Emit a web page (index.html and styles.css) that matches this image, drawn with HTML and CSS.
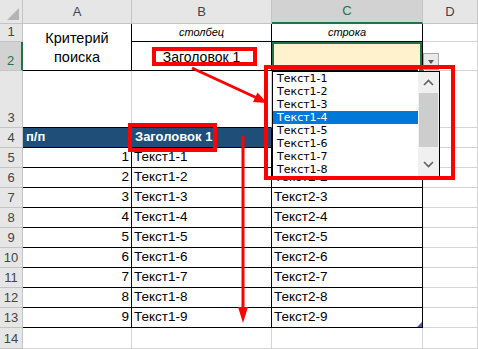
FILE: index.html
```html
<!DOCTYPE html>
<html lang="ru">
    <head>
        <meta charset="UTF-8">
        <meta name="viewport" content="width=device-width, initial-scale=1.0">
        <title>Поиск по заголовку</title>
        <link rel="stylesheet" href="styles.css">
    </head>
    <body>
        <div class="page">
            <!-- Sheet grid: header row + rows 1..14 -->
            <div class="sheet">
                <div class="hd corner"></div>
                <div class="hd col-hd">A</div>
                <div class="hd col-hd">B</div>
                <div class="hd col-hd sel">C</div>
                <div class="hd col-hd">D</div>

                <div class="hd row-hd">1</div>
                <div class="merge bk-r bk-b">Критерий поиска</div>
                <div class="note bk-r bk-b">столбец</div>
                <div class="note bk-r bk-b">строка</div>
                <div></div>

                <div class="hd row-hd sel">2</div>
                <div class="center bk-r bk-b">Заголовок 1</div>
                <div class="active bk-r bk-b"></div>
                <div></div>

                <div class="hd row-hd">3</div>
                <div class="bk-b"></div>
                <div class="bk-b"></div>
                <div class="bk-b"></div>
                <div></div>

                <div class="hd row-hd">4</div>
                <div class="th bk-r bk-b">п/п</div>
                <div class="th bk-r bk-b">Заголовок 1</div>
                <div class="th bk-r bk-b"></div>
                <div></div>

                <div class="hd row-hd">5</div>
                <div class="num bk-r bk-b">1</div>
                <div class="bk-r bk-b">Текст1-1</div>
                <div class="bk-r bk-b"></div>
                <div></div>

                <div class="hd row-hd">6</div>
                <div class="num bk-r bk-b">2</div>
                <div class="bk-r bk-b">Текст1-2</div>
                <div class="bk-r bk-b">Текст2-2</div>
                <div></div>

                <div class="hd row-hd">7</div>
                <div class="num bk-r bk-b">3</div>
                <div class="bk-r bk-b">Текст1-3</div>
                <div class="bk-r bk-b">Текст2-3</div>
                <div></div>

                <div class="hd row-hd">8</div>
                <div class="num bk-r bk-b">4</div>
                <div class="bk-r bk-b">Текст1-4</div>
                <div class="bk-r bk-b">Текст2-4</div>
                <div></div>

                <div class="hd row-hd">9</div>
                <div class="num bk-r bk-b">5</div>
                <div class="bk-r bk-b">Текст1-5</div>
                <div class="bk-r bk-b">Текст2-5</div>
                <div></div>

                <div class="hd row-hd">10</div>
                <div class="num bk-r bk-b">6</div>
                <div class="bk-r bk-b">Текст1-6</div>
                <div class="bk-r bk-b">Текст2-6</div>
                <div></div>

                <div class="hd row-hd">11</div>
                <div class="num bk-r bk-b">7</div>
                <div class="bk-r bk-b">Текст1-7</div>
                <div class="bk-r bk-b">Текст2-7</div>
                <div></div>

                <div class="hd row-hd">12</div>
                <div class="num bk-r bk-b">8</div>
                <div class="bk-r bk-b">Текст1-8</div>
                <div class="bk-r bk-b">Текст2-8</div>
                <div></div>

                <div class="hd row-hd">13</div>
                <div class="num bk-r bk-b">9</div>
                <div class="bk-r bk-b">Текст1-9</div>
                <div class="table-end bk-r bk-b">Текст2-9</div>
                <div></div>

                <div class="hd row-hd">14</div>
                <div></div>
                <div></div>
                <div></div>
                <div></div>
            </div>

            <!-- Data validation dropdown for C2 -->
            <div class="dv-btn"></div>
            <div class="dv-list">
                <ul class="dv-items">
                    <li>Текст1-1</li>
                    <li>Текст1-2</li>
                    <li>Текст1-3</li>
                    <li class="hl">Текст1-4</li>
                    <li>Текст1-5</li>
                    <li>Текст1-6</li>
                    <li>Текст1-7</li>
                    <li>Текст1-8</li>
                </ul>
                <div class="dv-scroll">
                    <div class="dv-arrow">
                        <svg width="21" height="21" viewBox="0 0 21 21"><polyline points="6,13 10.5,8.5 15,13" fill="none" stroke="#606060" stroke-width="1.6"/></svg>
                    </div>
                    <div class="dv-thumb"></div>
                    <div class="dv-track"></div>
                    <div class="dv-arrow">
                        <svg width="21" height="21" viewBox="0 0 21 21"><polyline points="6,7 10.5,11.5 15,7" fill="none" stroke="#606060" stroke-width="1.6"/></svg>
                    </div>
                </div>
            </div>

            <!-- Red callouts -->
            <svg class="marks" width="478" height="349" viewBox="0 0 478 349">
                <g fill="none" stroke="#ff0000" stroke-width="4">
                    <rect x="154" y="49" width="101" height="15"/>
                    <rect x="266" y="67" width="187" height="111"/>
                    <rect x="130" y="125" width="85" height="25"/>
                </g>
                <g stroke="#ff0000" stroke-width="3">
                    <line x1="192" y1="68" x2="257" y2="98"/>
                    <line x1="243" y1="136" x2="243" y2="310"/>
                </g>
                <g fill="#ff0000">
                    <polygon points="267,103 257.5,92.5 253,102"/>
                    <polygon points="238,307 248,307 243,323"/>
                </g>
            </svg>
        </div>
    </body>
</html>
```

FILE: styles.css
```css
/* Page */
body {
    margin: 0;
    background-color: white;
    font-family: 'Liberation Sans', Arial, sans-serif;
    overflow: hidden;
}

.page {
    position: relative;
    width: 478px;
    height: 349px;
    overflow: hidden;
}

/* Sheet grid */
.sheet {
    display: grid;
    grid-template-columns: 23px 109px 140px 151px 55px;
    grid-template-rows: 24px 18px 29px 57px repeat(10, 20px) 21px;
}

.sheet > div {
    box-sizing: border-box;
    display: flex;
    align-items: flex-end;
    padding: 0 2px 1px 2px;
    border-right: 1px solid #d4d4d4;
    border-bottom: 1px solid #d4d4d4;
    font-size: 13.5px;
    line-height: 18px;
    color: black;
    white-space: nowrap;
    overflow: hidden;
}

/* Black table borders */
.sheet > .bk-r {
    border-right-color: black;
}

.sheet > .bk-b {
    border-bottom-color: black;
}

/* Row and column headers */
.sheet > .hd {
    justify-content: center;
    padding: 0;
    background-color: #e6e6e6;
    border-color: #c4c4c4;
    color: #444;
    font-size: 13px;
}

.sheet > .col-hd {
    align-items: center;
}

.sheet > .hd.sel {
    background-color: #d2d2d2;
    color: #217346;
}

.sheet > .col-hd.sel {
    border-bottom: 2px solid #217346;
}

.sheet > .row-hd.sel {
    border-right: 2px solid #217346;
}

.corner {
    position: relative;
}

.corner::after {
    content: "";
    position: absolute;
    right: 3px;
    bottom: 3px;
    width: 12px;
    height: 12px;
    background-color: #b4b4b4;
    clip-path: polygon(100% 0, 100% 100%, 0 100%);
}

/* Cell kinds */
.sheet > .merge {
    grid-row: span 2;
    align-items: center;
    justify-content: center;
    padding: 2px 8px 0 8px;
    white-space: normal;
    text-align: center;
    font-size: 14.5px;
    line-height: 19px;
}

.sheet > .note {
    justify-content: center;
    font-style: italic;
    font-size: 11px;
    line-height: 16px;
}

.sheet > .center {
    justify-content: center;
    align-items: center;
    padding-top: 2px;
    font-size: 14px;
}

.sheet > .active {
    position: relative;
    overflow: visible;
    background-color: #fff2cc;
    box-shadow: inset 0 0 0 2px #217346;
}

.active::after {
    content: "";
    position: absolute;
    right: -3px;
    bottom: -3px;
    width: 5px;
    height: 5px;
    background-color: #217346;
    border: 1px solid white;
}

.sheet > .th {
    background-color: #1f4e78;
    color: white;
    font-weight: bold;
    font-size: 13px;
    padding-left: 3px;
}

.sheet > .num {
    justify-content: flex-end;
}

.sheet > .table-end {
    position: relative;
}

.table-end::after {
    content: "";
    position: absolute;
    right: 0;
    bottom: 0;
    width: 5px;
    height: 5px;
    background-color: #4c5fb0;
    clip-path: polygon(100% 0, 100% 100%, 0 100%);
}

/* Dropdown button next to C2 */
.dv-btn {
    position: absolute;
    left: 423px;
    top: 53px;
    width: 16px;
    height: 17px;
    box-sizing: border-box;
    border: 1px solid #a6a6a6;
    background-color: #e9e9e9;
}

.dv-btn::after {
    content: "";
    position: absolute;
    left: 4px;
    top: 6px;
    border-left: 3.5px solid transparent;
    border-right: 3.5px solid transparent;
    border-top: 4px solid #555;
}

/* Dropdown list */
.dv-list {
    position: absolute;
    left: 272px;
    top: 71px;
    width: 168px;
    height: 106px;
    box-sizing: border-box;
    border: 1px solid black;
    background-color: white;
    display: flex;
    font-family: 'DejaVu Sans', Tahoma, sans-serif;
    font-size: 11px;
}

.dv-items {
    flex: 1;
    list-style: none;
    margin: 0;
    padding: 0;
}

.dv-items li {
    height: 13px;
    line-height: 13px;
    padding-left: 4px;
    color: black;
}

.dv-items li.hl {
    background-color: #0078d7;
    color: white;
}

.dv-scroll {
    width: 21px;
    background-color: #f0f0f0;
    display: flex;
    flex-direction: column;
}

.dv-arrow {
    height: 21px;
}

.dv-arrow svg {
    display: block;
}

.dv-thumb {
    height: 54px;
    margin: 0 1px;
    background-color: #cdcdcd;
}

.dv-track {
    flex: 1;
}

/* Annotation layer */
.marks {
    position: absolute;
    left: 0;
    top: 0;
    pointer-events: none;
}
```
